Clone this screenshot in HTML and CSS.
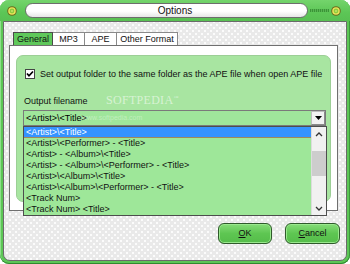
FILE: index.html
```html
<!DOCTYPE html>
<html>
<head>
<meta charset="utf-8">
<link rel="stylesheet" href="styles.css">
</head>
<body>
<div class="window">
  <div class="titlebar">
    <svg class="ticon" width="10" height="10" viewBox="0 0 10 10"><circle cx="5" cy="5" r="4.8" fill="#6b6a1c"/><circle cx="5" cy="5" r="3.8" fill="#ece45a"/><circle cx="5" cy="5" r="2.4" fill="#8fcc3e"/><circle cx="5" cy="5" r="1" fill="#c8e46a"/></svg>
    <div class="pill">Options</div>
    <div class="grip"></div>
    <svg class="ticon right" width="10" height="10" viewBox="0 0 10 10"><circle cx="5" cy="5" r="4.8" fill="#6b6a1c"/><circle cx="5" cy="5" r="3.8" fill="#ece45a"/><circle cx="5" cy="5" r="2.4" fill="#8fcc3e"/><circle cx="5" cy="5" r="1" fill="#c8e46a"/></svg>
  </div>
  <div class="client">
    <div class="tabs">
      <div class="tab active w-general">General</div>
      <div class="tab w-mp3">MP3</div>
      <div class="tab w-ape">APE</div>
      <div class="tab w-other">Other Format</div>
    </div>
    <div class="panel">
      <div class="group">
        <div class="check">
          <span class="box"><svg width="8" height="8" viewBox="0 0 8 8"><polyline points="1,3.5 3,5.8 7,1.5" fill="none" stroke="#000" stroke-width="1.7"/></svg></span>
          <span>Set output folder to the same folder as the APE file when open APE file</span>
        </div>
        <div class="label">Output filename</div>
        <div class="combo">
          <span class="combo-text">&lt;Artist&gt;\&lt;Title&gt;</span>
          <span class="dd"><svg width="7" height="4" viewBox="0 0 7 4"><polygon points="0,0 7,0 3.5,4" fill="#000"/></svg></span>
        </div>
      </div>
    </div>
    <div class="buttons">
      <div class="btn ok"><u>O</u>K</div>
      <div class="btn cancel"><u>C</u>ancel</div>
    </div>

    <div class="watermark">SOFTPEDIA<sup>™</sup></div>
    <div class="watermark2">www.softpedia.com</div>

    <div class="dropdown">
      <div class="items">
        <div class="item sel">&lt;Artist&gt;\&lt;Title&gt;</div>
        <div class="item">&lt;Artist&gt;\&lt;Performer&gt; - &lt;Title&gt;</div>
        <div class="item">&lt;Artist&gt; - &lt;Album&gt;\&lt;Title&gt;</div>
        <div class="item">&lt;Artist&gt; - &lt;Album&gt;\&lt;Performer&gt; - &lt;Title&gt;</div>
        <div class="item">&lt;Artist&gt;\&lt;Album&gt;\&lt;Title&gt;</div>
        <div class="item">&lt;Artist&gt;\&lt;Album&gt;\&lt;Performer&gt; - &lt;Title&gt;</div>
        <div class="item">&lt;Track Num&gt;</div>
        <div class="item">&lt;Track Num&gt; &lt;Title&gt;</div>
      </div>
      <div class="scrollbar">
        <div class="sb-btn"><svg width="8" height="5" viewBox="0 0 8 5"><polyline points="1,4 4,1 7,4" fill="none" stroke="#333" stroke-width="1.3"/></svg></div>
        <div class="sb-track"><div class="sb-thumb"></div></div>
        <div class="sb-btn"><svg width="8" height="5" viewBox="0 0 8 5"><polyline points="1,1 4,4 7,1" fill="none" stroke="#333" stroke-width="1.3"/></svg></div>
      </div>
    </div>
  </div>
</div>
</body>
</html>
```
FILE: styles.css
```css
html, body {
  margin: 0;
  padding: 0;
  background: #ffffff;
}
body {
  font-family: "Liberation Sans", Arial, sans-serif;
  font-size: 9px;
  color: #000;
}
.window {
  width: 350px;
  height: 264px;
  box-sizing: border-box;
  background: #5cc656;
  border-radius: 9px;
  box-shadow: inset 0 -1px 0 #2f8a2f, inset 1px 0 0 #8ee08a, inset 0 1px 0 #8ee08a, inset -1px 0 0 #3c9a3c;
  overflow: hidden;
}
.titlebar {
  height: 21px;
  display: flex;
  align-items: center;
  padding-left: 7px;
  background: linear-gradient(#74d46c, #5cc656 60%, #58c052);
}
.ticon {
  display: block;
  flex: none;
}
.ticon.right {
  margin-left: 2px;
}
.pill {
  margin-left: 8px;
  width: 283px;
  height: 15px;
  box-sizing: border-box;
  border: 1px solid #6d6d6d;
  border-radius: 8px;
  background: linear-gradient(#ffffff 55%, #e6e6e6);
  font-size: 10px;
  line-height: 13px;
  text-align: center;
  padding-left: 17px;
  color: #111;
}
.grip {
  margin-left: 2px;
  width: 19px;
  height: 3px;
  background: repeating-linear-gradient(90deg, #3a9436 0 1px, #57b552 1px 2px);
}
.client {
  position: relative;
  margin: 0 3px;
  height: 240px;
  box-sizing: border-box;
  border: 1px solid #6a6a6a;
  border-radius: 0 0 7px 7px;
  padding: 10px 6px 0 5px;
  background-color: #e9e9e9;
  background-image:
    radial-gradient(circle, #fbfbfb 0.9px, transparent 1.3px),
    radial-gradient(circle, #fbfbfb 0.9px, transparent 1.3px);
  background-size: 6px 6px;
  background-position: 0 0, 3px 3px;
}
.tabs {
  display: flex;
  margin-left: 4px;
  height: 13px;
}
.tab {
  height: 13px;
  box-sizing: border-box;
  line-height: 12px;
  text-align: center;
  background: #fff;
  border: 1px solid #8a8a8a;
  border-left: none;
  border-bottom: none;
  color: #111;
}
.tab.active {
  background: #5fc85b;
  border: 1px solid #4a4a4a;
  border-bottom: none;
}
.w-general { width: 40px; }
.w-mp3 { width: 32px; }
.w-ape { width: 32px; }
.w-other { width: 61px; }
.panel {
  margin-right: 2px;
  height: 166px;
  box-sizing: border-box;
  border: 1px solid #6f6f6f;
  background: #ffffff;
  padding: 9px 6px 0 6px;
}
.group {
  height: 147px;
  box-sizing: border-box;
  border: 1px solid #9ccf96;
  border-radius: 7px;
  background: #a8e5a1;
  padding: 12px 4px 0 6px;
}
.check {
  display: flex;
  align-items: center;
  height: 11px;
  margin-left: 2px;
  gap: 5px;
  color: #111;
}
.box {
  width: 10px;
  height: 10px;
  box-sizing: border-box;
  border: 1px solid #444;
  background: #fff;
  display: flex;
  align-items: center;
  justify-content: center;
}
.box svg { display: block; }
.label {
  margin-top: 17px;
  margin-left: 1px;
  height: 11px;
  line-height: 11px;
  color: #111;
}
.combo {
  margin-top: 3px;
  height: 16px;
  box-sizing: border-box;
  border: 1px solid #7a7a7a;
  background: #9fe69b;
  display: flex;
  align-items: center;
  justify-content: space-between;
  padding-left: 2px;
}
.combo-text {
  line-height: 14px;
}
.dd {
  width: 14px;
  height: 14px;
  box-sizing: border-box;
  background: #f2f2f2;
  border: 1px solid #bdbdbd;
  border-right-color: #8a8a8a;
  border-bottom-color: #8a8a8a;
  display: flex;
  align-items: center;
  justify-content: center;
}
.dd svg { display: block; }
.buttons {
  display: flex;
  justify-content: flex-end;
  gap: 13px;
  margin-top: 12px;
}
.btn {
  height: 21px;
  box-sizing: border-box;
  border: 1px solid #2f5a2b;
  border-radius: 6px;
  background: linear-gradient(#86dc78, #5ec652 50%, #55bd4a);
  box-shadow: inset 0 0 0 1px #9ae88e;
  text-align: center;
  line-height: 19px;
  color: #111;
}
.btn.ok { width: 54px; }
.btn.cancel { width: 55px; }
.watermark {
  position: absolute;
  left: 102px;
  top: 71px;
  font-family: "Liberation Serif", serif;
  font-size: 12px;
  letter-spacing: 0.3px;
  color: rgba(255, 255, 255, 0.55);
}
.watermark sup {
  font-size: 5px;
}
.watermark2 {
  position: absolute;
  left: 78px;
  top: 92px;
  font-size: 7px;
  color: rgba(255, 255, 255, 0.35);
}
.dropdown {
  position: absolute;
  left: 19px;
  top: 104px;
  width: 304px;
  height: 90px;
  box-sizing: border-box;
  border: 1px solid #4d4d4d;
  background: #9ee799;
  display: flex;
}
.items {
  flex: 1;
}
.item {
  height: 11px;
  line-height: 11px;
  padding-left: 2px;
  color: #111;
  white-space: nowrap;
}
.item.sel {
  background: #3593ff;
  color: #fff;
  box-shadow: inset 0 -1px 0 #a08a5a;
}
.scrollbar {
  width: 14px;
  display: flex;
  flex-direction: column;
  background: #f1f1f1;
  border-left: 1px solid #dcdcdc;
}
.sb-btn {
  height: 14px;
  display: flex;
  align-items: center;
  justify-content: center;
}
.sb-btn svg { display: block; }
.sb-track {
  flex: 1;
  padding-top: 10px;
}
.sb-thumb {
  height: 25px;
  background: #cdcdcd;
}
```
